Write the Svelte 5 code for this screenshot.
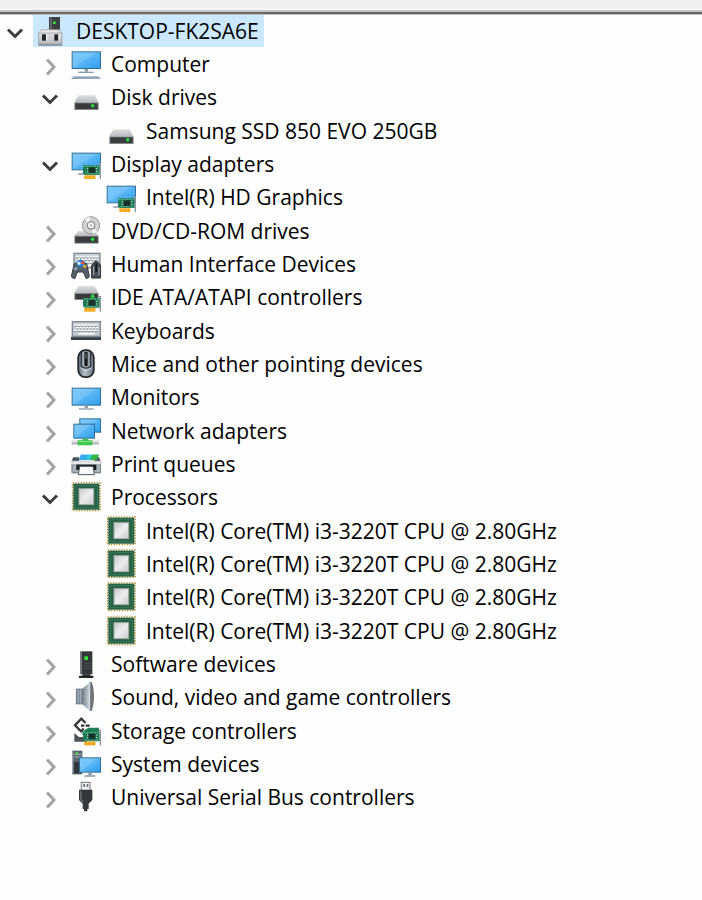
<script>
  const cpu = 'Intel(R) Core(TM) i3-3220T CPU @ 2.80GHz';

  let root = $state({
    name: 'DESKTOP-FK2SA6E',
    icon: 'root',
    open: true,
    children: [
      { name: 'Computer', icon: 'computer', open: false, children: [] },
      {
        name: 'Disk drives',
        icon: 'disk',
        open: true,
        children: [{ name: 'Samsung SSD 850 EVO 250GB', icon: 'disk' }]
      },
      {
        name: 'Display adapters',
        icon: 'display',
        open: true,
        children: [{ name: 'Intel(R) HD Graphics', icon: 'display' }]
      },
      { name: 'DVD/CD-ROM drives', icon: 'dvd', open: false, children: [] },
      { name: 'Human Interface Devices', icon: 'hid', open: false, children: [] },
      { name: 'IDE ATA/ATAPI controllers', icon: 'ide', open: false, children: [] },
      { name: 'Keyboards', icon: 'keyboard', open: false, children: [] },
      { name: 'Mice and other pointing devices', icon: 'mouse', open: false, children: [] },
      { name: 'Monitors', icon: 'monitor', open: false, children: [] },
      { name: 'Network adapters', icon: 'network', open: false, children: [] },
      { name: 'Print queues', icon: 'printer', open: false, children: [] },
      {
        name: 'Processors',
        icon: 'cpu',
        open: true,
        children: [1, 2, 3, 4].map(() => ({ name: cpu, icon: 'cpu' }))
      },
      { name: 'Software devices', icon: 'software', open: false, children: [] },
      { name: 'Sound, video and game controllers', icon: 'sound', open: false, children: [] },
      { name: 'Storage controllers', icon: 'storage', open: false, children: [] },
      { name: 'System devices', icon: 'system', open: false, children: [] },
      { name: 'Universal Serial Bus controllers', icon: 'usb', open: false, children: [] }
    ]
  });

  let selected = $state('DESKTOP-FK2SA6E');

  function flatten(node, level) {
    const rows = [{ node, level }];
    if (node.open) for (const child of node.children) rows.push(...flatten(child, level + 1));
    return rows;
  }

  let rows = $derived(flatten(root, 0));
</script>

{#snippet screen(x, y, w, h)}
  <rect x={x + 1.5} y={y + 1.5} width={w - 3} height={h - 3} fill="url(#screen)" stroke="#2f6f94" stroke-width="3" />
  <path d="M{x + 3} {y + h - 3}V{y + 3}H{x + w - 12}z" fill="#fff" opacity=".14" />
{/snippet}

{#snippet card(y)}
  <path d="M36 {y + 5}H86V{y + 34}H42L36 {y + 30}z" fill="#1f7d55" />
  <path d="M38 {y + 8}H84M44 {y + 30}H84" stroke="#6fc49a" stroke-width="3" stroke-dasharray="5 3" />
  <rect x="52" y={y + 11} width="22" height="17" fill="#16332a" />
  <path d="M48 {y + 15}h4M48 {y + 23}h4M74 {y + 15}h5M74 {y + 23}h5" stroke="#c4e4ce" stroke-width="3" />
  <rect x="40" y={y + 35} width="33" height="11" fill="#f5a313" />
  <path d="M51 {y + 37}v9M62 {y + 37}v9" stroke="#ffd777" stroke-width="2" />
  <path d="M82 {y + 1}h6v45" fill="none" stroke="#8d969c" stroke-width="4" />
{/snippet}

{#snippet drive(top, front, bottom)}
  <path d="M22 {top}H71L82 {front}H10z" fill="url(#metal)" />
  <rect x="10" y={front} width="73" height={bottom - front} fill="#83888b" />
  <rect x="13" y={front + 3} width="67" height={bottom - front - 6} fill="#393b3d" />
  <circle cx="65" cy={(front + bottom) / 2 - 1} r="5.5" fill="#26d33a" />
{/snippet}

{#snippet keys(x, y, w, h)}
  <rect x={x + 2} y={y + 2} width={w - 4} height={h - 4} fill="#c6ccd2" stroke="#7f8a95" stroke-width="4" />
  <path
    d="M{x + 9} {y + 12}H{x + w - 7}M{x + 13} {y + 20}H{x + w - 7}M{x + 9} {y + 28}H{x + w - 7}"
    stroke="#fff" stroke-width="6" stroke-dasharray="7 3" />
  <path
    d="M{x + 9} {y + 16}H{x + w - 7}M{x + 13} {y + 24}H{x + w - 7}M{x + 9} {y + 32}H{x + w - 7}"
    stroke="#7c8995" stroke-width="3" stroke-dasharray="7 3" />
  <path d="M{x + 20} {y + 38}H{x + w - 20}" stroke="#fff" stroke-width="5" />
{/snippet}

{#snippet icon(name)}
  <svg class="icon" viewBox="0 0 90 96" aria-hidden="true">
    {#if name === 'root'}
      <rect x="39" y="6" width="33" height="42" fill="#3c4043" />
      <rect x="42" y="8" width="5" height="38" fill="#6a6f73" />
      <rect x="51" y="19" width="8" height="8" fill="#35dc3f" />
      <path d="M16 44H70L79 56H7z" fill="#e2e4e6" stroke="#9ba0a4" stroke-width="2" />
      <rect x="8" y="54" width="70" height="33" fill="url(#metal)" stroke="#92979b" stroke-width="2" />
      <path d="M7 90H79" stroke="#777c80" stroke-width="4" />
      <rect x="18" y="58" width="12" height="19" fill="#222629" />
      <rect x="55" y="58" width="12" height="19" fill="#222629" />
      <path d="M32 58v19M69 58v19" stroke="#fff" stroke-width="3" />
    {:else if name === 'computer'}
      {@render screen(2, 10, 88, 53)}
      <path d="M46 63V71" stroke="#8f9ba5" stroke-width="10" />
      <path d="M22 73H68" stroke="#8799a8" stroke-width="4" />
      <path d="M8 85H82L90 93H0z" fill="#90a4b8" />
      <path d="M9 86H81" stroke="#b6c6d5" stroke-width="2" />
    {:else if name === 'disk'}
      {@render drive(43, 64, 87)}
    {:else if name === 'display'}
      {@render screen(2, 14, 88, 53)}
      <path d="M22 78H40V70" fill="none" stroke="#8799a8" stroke-width="4" />
      {@render card(47)}
    {:else if name === 'dvd'}
      {@render drive(47, 62, 86)}
      <circle cx="60" cy="31" r="26" fill="#d0d2d4" stroke="#94999c" stroke-width="3" />
      <path d="M60 31L42 13A26 26 0 0 1 56 6zM60 31L78 50A26 26 0 0 1 66 56z" fill="#f6f7f8" />
      <circle cx="60" cy="31" r="11" fill="#fff" stroke="#8b9094" stroke-width="4" />
      <circle cx="60" cy="31" r="4" fill="#b5babd" />
    {:else if name === 'hid'}
      {@render keys(7, 14, 82, 48)}
      <path d="M10 47Q18 42 28 46Q40 42 47 47L55 84Q53 93 45 91L37 72H19L12 91Q4 93 1 85z" fill="#55606b" stroke="#343d46" stroke-width="3" />
      <path d="M17 42L29 34L43 42L39 56H20z" fill="#2582df" />
      <circle cx="35" cy="44" r="5" fill="#f04a24" />
      <circle cx="24" cy="46" r="5" fill="#d8f0ff" />
      <circle cx="41" cy="55" r="5" fill="#f1b321" />
      <circle cx="14" cy="62" r="5" fill="#8fa0af" />
      <path d="M62 90V52L72 40H78L89 52V90z" fill="#454d55" stroke="#25292d" stroke-width="3" />
      <path d="M76 46V72" stroke="#15181a" stroke-width="6" />
      <path d="M68 56V82M84 58V82" stroke="#a9b2ba" stroke-width="3" />
    {:else if name === 'ide'}
      {@render drive(15, 36, 57)}
      {@render card(46)}
    {:else if name === 'keyboard'}
      {@render keys(2, 18, 88, 48)}
      <path d="M0 66H90V75H0z" fill="#343c44" />
      <path d="M2 66H89" stroke="#76828d" stroke-width="2" />
    {:else if name === 'mouse'}
      <rect x="19" y="4" width="52" height="86" rx="24" fill="#23272b" />
      <rect x="24" y="9" width="42" height="76" rx="20" fill="url(#mouse)" />
      <path d="M31 12V55Q45 66 59 55V12" fill="none" stroke="#2e343a" stroke-width="4" />
      <path d="M29 60Q45 74 61 60" fill="none" stroke="#d3dae1" stroke-width="3" />
      <rect x="40" y="11" width="10" height="44" rx="4" fill="#15191c" />
      <path d="M45 16V31" stroke="#727d87" stroke-width="3" />
    {:else if name === 'monitor'}
      {@render screen(2, 20, 88, 54)}
      <path d="M46 74V81" stroke="#8f9ba5" stroke-width="10" />
      <path d="M24 84H68" stroke="#8799a8" stroke-width="4" />
    {:else if name === 'network'}
      {@render screen(25, 10, 65, 43)}
      {@render screen(7, 26, 65, 45)}
      <path d="M2 83H84" stroke="#b7bcc0" stroke-width="12" />
      <path d="M2 80H84" stroke="#eceeef" stroke-width="3" />
      <path d="M34 71H52V76H64V91H20V76H34z" fill="#3cc44b" />
      <path d="M23 80H61" stroke="#8ce995" stroke-width="3" />
    {:else if name === 'printer'}
      <path d="M6 28H24V42H2z" fill="#4a5157" />
      <path d="M80 28H84L90 42H70V34z" fill="#4a5157" />
      <path d="M24 36L30 20H84L76 36z" fill="#1e87df" />
      <path d="M30 20H50L44 36H24z" fill="#3aa9f2" />
      <path d="M50 20H66L60 36H44z" fill="#2ccbd8" />
      <path d="M64 20H84L76 36H58z" fill="#33b53c" />
      <path d="M2 38H90V76H2z" fill="#aab1b6" />
      <path d="M4 40H88V48H4z" fill="#e6e9eb" />
      <path d="M3 74V50M89 74V50" stroke="#6c757c" stroke-width="3" />
      <path d="M16 50H76V66H16z" fill="#171b1e" />
      <path d="M26 55H66L70 80H22z" fill="#f6f8fa" stroke="#4b545b" stroke-width="3" />
      <path d="M5 74H20M72 74H88" stroke="#7d868c" stroke-width="4" />
    {:else if name === 'cpu'}
      <rect x="5" y="6" width="82" height="82" fill="none" stroke="#b8912f" stroke-width="5" stroke-dasharray="4 4" />
      <rect x="7" y="8" width="78" height="78" fill="#276247" />
      <rect x="13" y="14" width="66" height="66" fill="none" stroke="#397759" stroke-width="3" />
      <rect x="24" y="23" width="44" height="48" fill="url(#chip)" stroke="#a3aaa6" stroke-width="3" />
    {:else if name === 'software'}
      <path d="M28 10H64V79H28z" fill="#34383b" />
      <path d="M31 12V78" stroke="#73797d" stroke-width="4" />
      <rect x="40" y="25" width="11" height="11" fill="#31df35" />
      <path d="M38 46H59M38 54H59M38 62H59" stroke="#53585b" stroke-width="2" />
      <path d="M34 79H58V83H67V90H24V83H34z" fill="#24282a" />
    {:else if name === 'sound'}
      <path d="M16 24H36V69H16z" fill="#7f8d99" stroke="#586571" stroke-width="2" />
      <path d="M34 24L56 3V90L34 69z" fill="url(#cone)" />
      <path d="M56 3H62Q69 20 69 46Q69 72 62 90H56z" fill="#6d747a" />
      <path d="M22 25V68M29 25V68" stroke="#bac6d0" stroke-width="2" />
      <path d="M56 6V88" stroke="#dce2e6" stroke-width="3" />
    {:else if name === 'storage'}
      <path d="M44 24L31 11L12 31L30 49L38 41" fill="none" stroke="#34383b" stroke-width="7" />
      <path d="M30 32H40M44 32H56" stroke="#34383b" stroke-width="7" />
      <path d="M10 54L24 66H48V80H10z" fill="#4c5358" />
      <path d="M34 50L52 38H84V60H34z" fill="#1f7d55" />
      {@render card(45)}
    {:else if name === 'system'}
      <path d="M3 8H34V79H3z" fill="#59636b" />
      <path d="M5 10V77" stroke="#9ca7af" stroke-width="4" />
      <path d="M9 42H26V76H9z" fill="#30383e" />
      <path d="M10 19H31M10 27H31" stroke="#b7c0c6" stroke-width="3" />
      <rect x="14" y="12" width="7" height="6" fill="#46dc44" />
      {@render screen(24, 28, 66, 46)}
      <path d="M57 74V81" stroke="#8f9ba5" stroke-width="10" />
      <path d="M40 84H73" stroke="#71899b" stroke-width="4" />
    {:else if name === 'usb'}
      <rect x="31" y="4" width="26" height="25" fill="#edf0f1" stroke="#73797d" stroke-width="3" />
      <path d="M37 10H42V17H37zM47 10H52V17H47z" fill="#4e5559" />
      <path d="M24 26H64V57L54 67H34L24 57z" fill="#34383b" />
      <path d="M30 30V56L37 62" fill="none" stroke="#71777b" stroke-width="4" />
      <path d="M35 66H53V84H49V91H39V84H35z" fill="#34383b" />
    {/if}
  </svg>
{/snippet}

<svg class="defs" width="0" height="0" aria-hidden="true">
  <defs>
    <linearGradient id="screen" x1="0" y1="0" x2="1" y2="1">
      <stop offset="0" stop-color="#6cc3fa" />
      <stop offset="0.5" stop-color="#58b6f6" />
      <stop offset="1" stop-color="#2e9ced" />
    </linearGradient>
    <linearGradient id="metal" x1="0" y1="0" x2="0" y2="1">
      <stop offset="0" stop-color="#dcdee0" />
      <stop offset="1" stop-color="#b8bbbe" />
    </linearGradient>
    <linearGradient id="mouse">
      <stop offset="0" stop-color="#68737e" />
      <stop offset="0.4" stop-color="#b3bdc8" />
      <stop offset="1" stop-color="#737f8c" />
    </linearGradient>
    <linearGradient id="chip" x1="0" y1="0" x2="1" y2="1">
      <stop offset="0" stop-color="#c5c9c7" />
      <stop offset="0.5" stop-color="#eceeed" />
      <stop offset="1" stop-color="#c8cbca" />
    </linearGradient>
    <linearGradient id="cone">
      <stop offset="0" stop-color="#6e7c88" />
      <stop offset="1" stop-color="#d0d9e0" />
    </linearGradient>
  </defs>
</svg>

<div class="window">
  <div class="toolbar"></div>
  <ul class="tree" role="tree" aria-label="Devices">
    {#each rows as { node, level }}
      <li
        class="row level-{level}"
        role="treeitem"
        aria-level={level + 1}
        aria-selected={selected === node.name}
        aria-expanded={node.children ? node.open : undefined}
      >
        {#if node.children}
          <button class="toggle" class:open={node.open} aria-label="Toggle {node.name}" onclick={() => (node.open = !node.open)}>
            <svg viewBox="0 0 24 24" aria-hidden="true">
              <path d={node.open ? 'M5 8.5L12 15.5L19 8.5' : 'M9 5.5L16 13L9 20.5'} />
            </svg>
          </button>
        {:else}
          <span class="spacer"></span>
        {/if}
        <button class="item" class:selected={selected === node.name} onclick={() => (selected = node.name)}>
          {@render icon(node.icon)}
          <span>{node.name}</span>
        </button>
      </li>
    {/each}
  </ul>
</div>

<style>
  :global(body) {
    margin: 0;
    background: #fefefe;
  }

  .defs {
    position: absolute;
  }

  .window {
    font-family: 'Open Sans', 'Noto Sans', sans-serif;
    font-size: 21px;
    color: #000;
  }

  .toolbar {
    position: relative;
    box-sizing: border-box;
    height: 14px;
    background: linear-gradient(#efefef 8px, #f5f5f5 8px, #f5f5f5 10px, #c6c6c6 10px);
    border-bottom: 2px solid #686868;
    box-shadow: 0 1px #bdbdbd;
  }

  .tree {
    margin: 0;
    padding: 0;
    list-style: none;
  }

  .row {
    display: flex;
    height: 33px;
  }

  .row:nth-child(3n) {
    height: 34px;
  }

  .level-1 {
    padding-left: 35px;
  }

  .level-2 {
    padding-left: 70px;
  }

  button {
    border: 0;
    padding: 0;
    background: none;
    font: inherit;
    color: inherit;
  }

  .toggle,
  .spacer {
    flex: none;
    width: 33px;
  }

  .toggle {
    display: flex;
    align-items: center;
    padding-left: 3px;
  }

  .toggle svg {
    width: 24px;
    height: 24px;
    margin-top: 4px;
    fill: none;
    stroke: #a3a3a3;
    stroke-width: 3;
  }

  .toggle.open svg {
    stroke: #3c3c3c;
  }

  .item {
    display: flex;
    align-items: center;
    gap: 10px;
    height: 33px;
    padding: 0 5px 0 3px;
    line-height: 32px;
    white-space: nowrap;
  }

  .item.selected {
    background: #cce8ff;
  }

  .icon {
    flex: none;
    width: 30px;
    height: 32px;
  }
</style>
